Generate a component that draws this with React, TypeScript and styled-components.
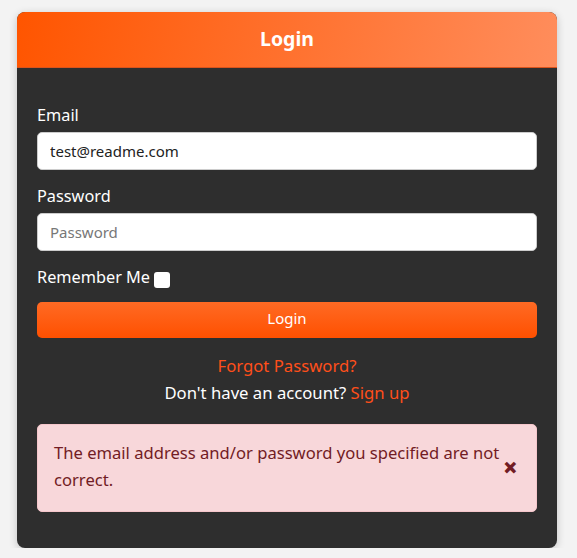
import React, { useState } from 'react';
import styled, { createGlobalStyle } from 'styled-components';

const GlobalStyle = createGlobalStyle`
  html, body {
    margin: 0;
    padding: 0;
    background: #f3f3f3;
    font-family: 'Noto Sans', 'Open Sans', sans-serif;
  }
`;

const Card = styled.div`
  width: 540px;
  margin: 12px 0 0 17px;
  background: #2e2e2e;
  border-radius: 8px;
  overflow: hidden;
  box-shadow: 0 2px 8px rgba(0, 0, 0, 0.2);
`;

const Header = styled.div`
  height: 56px;
  padding-bottom: 3px;
  display: flex;
  align-items: center;
  justify-content: center;
  background: linear-gradient(100deg, #ff5500 0%, #ff8d5c 100%);
  border-bottom: 1px solid #d9531c;
  color: #fff;
  font-size: 19.5px;
  font-weight: 700;
  box-sizing: border-box;
`;

const Body = styled.form`
  padding: 36px 20px 36px;
  display: flex;
  flex-direction: column;
`;

const Label = styled.label`
  color: #fff;
  font-size: 16.3px;
  line-height: 22px;
  margin-bottom: 6px;
`;

const Input = styled.input`
  height: 38px;
  box-sizing: border-box;
  border: 1px solid #ccc;
  border-radius: 5px;
  padding: 0 12px;
  font-family: inherit;
  font-size: 15px;
  color: #222;
  margin-bottom: 15px;
  &::placeholder {
    color: #777;
  }
`;

const CheckRow = styled.label`
  display: flex;
  align-items: center;
  color: #fff;
  font-size: 16.3px;
  line-height: 22px;
  margin-bottom: 14px;
`;

const Box = styled.span`
  display: inline-block;
  width: 16px;
  height: 16px;
  margin-left: 4px;
  margin-top: 5px;
  background: #fff;
  border-radius: 3px;
`;

const Button = styled.button`
  height: 36px;
  padding: 0 0 4px;
  border: none;
  border-radius: 5px;
  background: linear-gradient(180deg, #ff6a24 0%, #ff5000 100%);
  color: #fff;
  font-family: inherit;
  font-size: 15px;
  cursor: pointer;
`;

const Links = styled.div`
  margin-top: 14px;
  text-align: center;
  font-size: 16.7px;
  line-height: 27px;
  color: #fff;
`;

const Link = styled.a`
  color: #ff4f1a;
  text-decoration: none;
`;

const Alert = styled.div`
  margin-top: 18px;
  background: #f8d7da;
  border: 1px solid #f5c6cb;
  border-radius: 5px;
  color: #721c24;
  font-size: 16.6px;
  line-height: 27px;
  padding: 14px 36px 18px 16px;
  position: relative;
  min-height: 88px;
  box-sizing: border-box;
`;

const Close = styled.span`
  position: absolute;
  right: 18px;
  top: 29px;
  font-size: 26px;
  font-weight: 900;
  line-height: 1;
  color: #721c24;
  cursor: pointer;
`;

export default function App() {
  const [email, setEmail] = useState('test@readme.com');
  const [showAlert, setShowAlert] = useState(true);

  return (
    <>
      <GlobalStyle />
      <Card>
        <Header>Login</Header>
        <Body onSubmit={e => e.preventDefault()}>
          <Label>Email</Label>
          <Input value={email} onChange={e => setEmail(e.target.value)} />
          <Label>Password</Label>
          <Input type="password" placeholder="Password" />
          <CheckRow>
            Remember Me <Box />
          </CheckRow>
          <Button>Login</Button>
          <Links>
            <Link href="#">Forgot Password?</Link>
            <div>
              Don't have an account? <Link href="#">Sign up</Link>
            </div>
          </Links>
          {showAlert && (
            <Alert>
              The email address and/or password you specified are not correct.
              <Close onClick={() => setShowAlert(false)}>×</Close>
            </Alert>
          )}
        </Body>
      </Card>
    </>
  );
}
